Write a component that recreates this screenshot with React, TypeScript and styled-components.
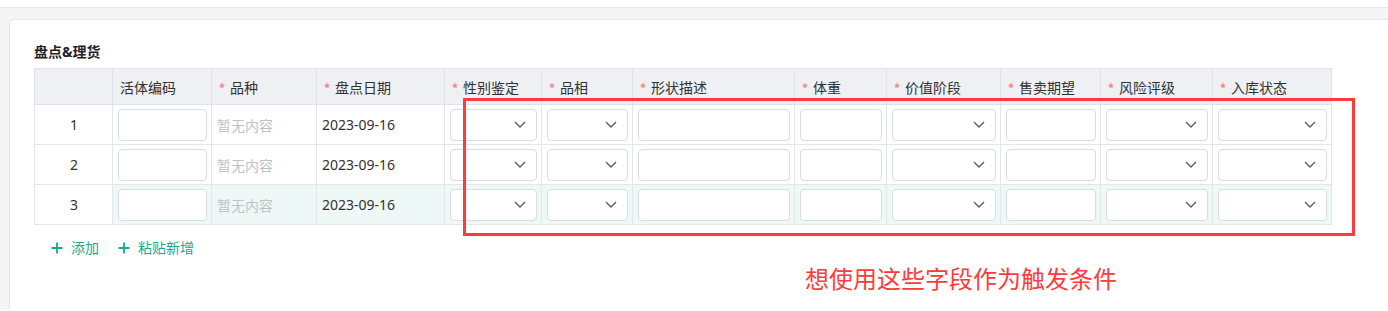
import React from "react";
import styled, { createGlobalStyle } from "styled-components";

const GlobalStyle = createGlobalStyle`
  html, body { margin: 0; padding: 0; background: #ffffff; overflow: hidden; }
  body { font-family: "Noto Sans", "Noto Sans CJK SC", sans-serif; color: #303133; }
  * { box-sizing: border-box; }
`;

type ColType = "index" | "input" | "empty" | "date" | "select";
interface Col { w: number; label: string; req: boolean; type: ColType }

const cols: Col[] = [
  { w: 78, label: "", req: false, type: "index" },
  { w: 99, label: "活体编码", req: false, type: "input" },
  { w: 105, label: "品种", req: true, type: "empty" },
  { w: 128, label: "盘点日期", req: true, type: "date" },
  { w: 97, label: "性别鉴定", req: true, type: "select" },
  { w: 91, label: "品相", req: true, type: "select" },
  { w: 162, label: "形状描述", req: true, type: "input" },
  { w: 92, label: "体重", req: true, type: "input" },
  { w: 114, label: "价值阶段", req: true, type: "select" },
  { w: 100, label: "售卖期望", req: true, type: "input" },
  { w: 112, label: "风险评级", req: true, type: "select" },
  { w: 119, label: "入库状态", req: true, type: "select" },
];

const rows = [1, 2, 3];

const TopBar = styled.div`
  height: 8px;
  background: #ffffff;
  border-bottom: 1px solid #e6e7ea;
`;

const Main = styled.div`
  background: #f4f5f7;
  padding: 11px 0 0 9px;
  height: 302px;
`;

const Card = styled.div`
  position: relative;
  background: #ffffff;
  border: 1px solid #e6e7ea;
  border-right: none;
  border-bottom: none;
  border-radius: 4px 0 0 0;
  height: 100%;
  padding: 22px 0 0 24px;
`;

const Title = styled.div`
  font-size: 14px;
  font-weight: 700;
  line-height: 20px;
  color: #1f2329;
  margin-bottom: 6px;
`;

const Table = styled.table`
  border-collapse: collapse;
  table-layout: fixed;
  width: 1298px;
  font-size: 14px;
`;

const Th = styled.th`
  height: 36px;
  background: #eff0f4;
  border: 1px solid #e1e3e8;
  padding: 0 0 0 7px;
  text-align: left;
  font-weight: 400;
  color: #303133;
  white-space: nowrap;
`;

const Star = styled.span`
  color: #f56c6c;
  font-size: 11px;
  margin-right: 5px;
  position: relative;
  top: -2px;
`;

const Td = styled.td<{ $hl: boolean; $center?: boolean }>`
  height: 40px;
  border: 1px solid #e4e6ea;
  padding: 0 4px 0 5px;
  background: ${(p) => (p.$hl ? "#eef8f6" : "#ffffff")};
  text-align: ${(p) => (p.$center ? "center" : "left")};
  color: #303133;
  vertical-align: middle;
`;

const Placeholder = styled.span`
  color: #bfc2c8;
`;

const Input = styled.div`
  height: 32px;
  width: 100%;
  background: #ffffff;
  border: 1px solid #d9dce2;
  border-radius: 4px;
`;

const Select = styled(Input)`
  display: flex;
  align-items: center;
  justify-content: flex-end;
  padding-right: 10px;
`;

const Actions = styled.div`
  display: flex;
  gap: 19px;
  margin: 13px 0 0 17px;
`;

const ActionButton = styled.div`
  display: flex;
  align-items: center;
  gap: 8px;
  font-size: 14px;
  line-height: 20px;
  color: #1aa98e;
`;

const RedBox = styled.div`
  position: absolute;
  left: 453px;
  top: 78px;
  width: 892px;
  height: 138px;
  border: 3px solid #ff3b3b;
`;

const Note = styled.div`
  position: absolute;
  left: 795px;
  top: 242px;
  font-family: "Noto Sans CJK SC", sans-serif;
  font-size: 24px;
  line-height: 32px;
  color: #ff3b3b;
  white-space: nowrap;
`;

const Chevron = () => (
  <svg width="12" height="7" viewBox="0 0 12 7">
    <polyline points="1,1 6,6 11,1" fill="none" stroke="#555a66" strokeWidth="1.3" />
  </svg>
);

const Plus = () => (
  <svg width="12" height="12" viewBox="0 0 12 12">
    <path d="M6 0.5v11M0.5 6h11" stroke="#1aa98e" strokeWidth="1.8" />
  </svg>
);

function cell(c: Col, r: number) {
  switch (c.type) {
    case "index":
      return r;
    case "input":
      return <Input />;
    case "select":
      return (
        <Select>
          <Chevron />
        </Select>
      );
    case "empty":
      return <Placeholder>暂无内容</Placeholder>;
    case "date":
      return "2023-09-16";
  }
}

export default function App() {
  return (
    <>
      <GlobalStyle />
      <TopBar />
      <Main>
        <Card>
          <Title>盘点&amp;理货</Title>
          <Table>
            <colgroup>
              {cols.map((c, i) => (
                <col key={i} style={{ width: c.w }} />
              ))}
            </colgroup>
            <thead>
              <tr>
                {cols.map((c, i) => (
                  <Th key={i}>
                    {c.req && <Star>*</Star>}
                    {c.label}
                  </Th>
                ))}
              </tr>
            </thead>
            <tbody>
              {rows.map((r) => (
                <tr key={r}>
                  {cols.map((c, i) => (
                    <Td key={i} $hl={r === 3 && c.type !== "index"} $center={c.type === "index"}>
                      {cell(c, r)}
                    </Td>
                  ))}
                </tr>
              ))}
            </tbody>
          </Table>
          <Actions>
            <ActionButton>
              <Plus />
              添加
            </ActionButton>
            <ActionButton>
              <Plus />
              粘贴新增
            </ActionButton>
          </Actions>
          <RedBox />
          <Note>想使用这些字段作为触发条件</Note>
        </Card>
      </Main>
    </>
  );
}
